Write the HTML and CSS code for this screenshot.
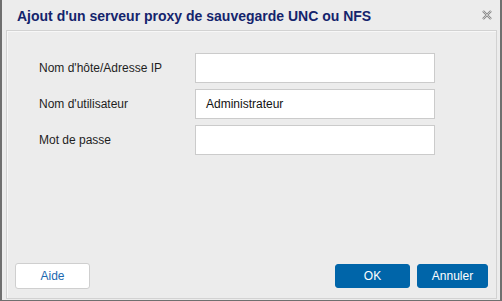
FILE: index.html
```html
<!DOCTYPE html>
<html lang="fr">
<head>
<meta charset="utf-8">
<title>Ajout d'un serveur proxy</title>
<link rel="stylesheet" href="styles.css">
</head>
<body>
<div class="dialog">
  <div class="header">
    <div class="title">Ajout d'un serveur proxy de sauvegarde UNC ou NFS</div>
    <svg class="close" width="10" height="10" viewBox="0 0 10 10">
      <path d="M1 1 L9 9 M9 1 L1 9" stroke="#8a8a8a" stroke-width="2.4" fill="none"/>
      <path d="M1 1 L9 9 M9 1 L1 9" stroke="#e2e2e2" stroke-width="0.7" fill="none"/>
    </svg>
  </div>
  <div class="panel">
    <div class="form">
      <div class="row">
        <label class="label">Nom d'hôte/Adresse IP</label>
        <div class="input"></div>
      </div>
      <div class="row">
        <label class="label">Nom d'utilisateur</label>
        <div class="input">Administrateur</div>
      </div>
      <div class="row">
        <label class="label">Mot de passe</label>
        <div class="input"></div>
      </div>
    </div>
    <div class="footer">
      <button class="btn btn-help">Aide</button>
      <div class="actions">
        <button class="btn btn-primary btn-ok">OK</button>
        <button class="btn btn-primary btn-cancel">Annuler</button>
      </div>
    </div>
  </div>
</div>
</body>
</html>
```

FILE: styles.css
```css
html, body {
  margin: 0;
  padding: 0;
  background: #ececec;
}

body {
  font-family: "Liberation Sans", Arial, sans-serif;
  width: 502px;
  height: 301px;
  overflow: hidden;
}

.dialog {
  box-sizing: border-box;
  width: 502px;
  height: 301px;
  background: #ececec;
  border-left: 2px solid #6f6f6f;
  border-right: 2px solid #6f6f6f;
  border-bottom: 1px solid #6f6f6f;
  display: flex;
  flex-direction: column;
}

.header {
  height: 30px;
  flex: none;
  display: flex;
  align-items: flex-start;
  justify-content: space-between;
  padding: 0 8px 0 15px;
}

.title {
  font-size: 14px;
  font-weight: bold;
  color: #14246c;
  margin-top: 8px;
  line-height: 16px;
}

.close {
  margin-top: 10px;
}

.panel {
  flex: 1;
  margin: 0 3px 1px 4px;
  border: 1px solid #d2d2d2;
  box-shadow: inset 1px 1px 0 #f7f7f7;
  display: flex;
  flex-direction: column;
}

.form {
  padding: 22px 0 0 32px;
  display: flex;
  flex-direction: column;
  gap: 6px;
}

.row {
  display: flex;
  align-items: center;
}

.label {
  width: 156px;
  font-size: 12px;
  color: #1e1e1e;
}

.input {
  box-sizing: border-box;
  width: 240px;
  height: 30px;
  background: #ffffff;
  border: 1px solid #cbcbcb;
  padding: 0 10px;
  font-size: 12px;
  line-height: 28px;
  color: #111111;
}

.footer {
  margin-top: auto;
  display: flex;
  justify-content: space-between;
  align-items: center;
  padding: 0 8px 9px 8px;
}

.actions {
  display: flex;
  gap: 7px;
}

.btn {
  font-family: "Liberation Sans", Arial, sans-serif;
  font-size: 12px;
  border-radius: 3px;
  padding: 0;
  margin: 0;
  box-sizing: border-box;
}

.btn-help {
  width: 75px;
  height: 26px;
  background: #ffffff;
  border: 1px solid #cfcfcf;
  color: #1a68b0;
}

.btn-primary {
  height: 24px;
  background: #0065a9;
  border: 1px solid #0065a9;
  color: #ffffff;
}

.btn-ok {
  width: 75px;
}

.btn-cancel {
  width: 71px;
}
```
